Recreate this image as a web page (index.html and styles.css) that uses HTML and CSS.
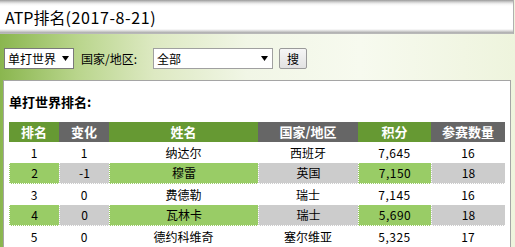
FILE: index.html
```html
<!DOCTYPE html>
<html lang="zh-CN">
<head>
<meta charset="utf-8">
<title>ATP排名</title>
<link rel="stylesheet" href="styles.css">
</head>
<body>
<header class="titlebar"><h1>ATP排名<span class="date">(2017-8-21)</span></h1></header>
<main class="page">
  <form class="filters">
    <select class="sel sel-type"><option>单打世界</option></select>
    <label class="lbl">国家/地区:</label>
    <select class="sel sel-country"><option>全部</option></select>
    <button type="button" class="btn">搜</button>
  </form>
  <section class="panel">
    <h2 class="panel-title">单打世界排名:</h2>
    <table class="rank">
      <colgroup><col class="c1"><col class="c2"><col class="c3"><col class="c4"><col class="c5"><col class="c6"></colgroup>
      <thead>
        <tr><th class="g">排名</th><th class="d">变化</th><th class="g">姓名</th><th class="d">国家/地区</th><th class="g">积分</th><th class="d">参赛数量</th></tr>
      </thead>
      <tbody>
        <tr><td>1</td><td>1</td><td>纳达尔</td><td>西班牙</td><td class="num">7,645</td><td>16</td></tr>
        <tr class="alt"><td class="g">2</td><td class="d">-1</td><td class="g">穆雷</td><td class="d">英国</td><td class="g num">7,150</td><td class="d">18</td></tr>
        <tr><td>3</td><td>0</td><td>费德勒</td><td>瑞士</td><td class="num">7,145</td><td>16</td></tr>
        <tr class="alt"><td class="g">4</td><td class="d">0</td><td class="g">瓦林卡</td><td class="d">瑞士</td><td class="g num">5,690</td><td class="d">18</td></tr>
        <tr><td>5</td><td>0</td><td>德约科维奇</td><td>塞尔维亚</td><td class="num">5,325</td><td>17</td></tr>
      </tbody>
    </table>
  </section>
</main>
</body>
</html>
```

FILE: styles.css
```css
html, body {
  margin: 0;
  padding: 0;
}
body {
  width: 515px;
  height: 247px;
  overflow: hidden;
  font-family: "Noto Sans CJK SC", "Liberation Sans", sans-serif;
  font-size: 12px;
  color: #000;
  background: linear-gradient(to right, #8ab64f 0%, #b9d58c 15%, #dde9c2 30%, #f1f6e6 48%, #f7faef 70%, #eef4dd 100%);
}
.titlebar {
  height: 34px;
  margin-right: 2px;
  background: linear-gradient(to bottom, #9a9a9a 0px, #cfcfcf 2px, #f4f4f4 4px, #fff 6px, #fff 29px, #d6d6d6 31px, #a8a8a8 33px, #c8c8c8 34px);
  box-shadow: 1px 0 0 #b0b0b0;
}
.titlebar h1 {
  margin: 0;
  padding: 0 0 0 5px;
  font-size: 16px;
  font-weight: normal;
  line-height: 34px;
}
.date {
  letter-spacing: 0.6px;
}
.filters {
  display: flex;
  align-items: center;
  height: 21px;
  margin: 14px 0 0 4px;
}
.sel {
  appearance: none;
  -webkit-appearance: none;
  height: 21px;
  margin: 0;
  padding: 0 0 0 3px;
  font-family: inherit;
  font-size: 12px;
  color: #000;
  border: 1px solid #a0a0a0;
  border-radius: 0;
  background: #fff url("data:image/svg+xml;utf8,<svg xmlns='http://www.w3.org/2000/svg' width='7' height='5'><path d='M0 0h7L3.5 5z' fill='black'/></svg>") no-repeat right 4px center;
}
.sel-type {
  width: 70px;
  border-color: #7a7a7a;
}
.lbl {
  margin-left: 7px;
  width: 72px;
}
.sel-country {
  width: 120px;
}
.btn {
  margin-left: 6px;
  width: 28px;
  height: 21px;
  padding: 0;
  font-family: inherit;
  font-size: 12px;
  border: 1px solid #9a9a9a;
  border-radius: 2px;
  background: linear-gradient(#f6f6f6, #e2e2e2);
  color: #000;
}
.panel {
  margin: 11px 4px 0 3px;
  padding: 11px 0 0 5px;
  background: #fff;
  border: 1px solid #a5a5a5;
  border-bottom: 0;
}
.panel-title {
  margin: 0;
  font-size: 13px;
  font-weight: bold;
  line-height: 20px;
}
.rank {
  margin-top: 10px;
  width: 496px;
  border-collapse: separate;
  border-spacing: 0;
  table-layout: fixed;
  text-align: center;
}
.c1 { width: 50px; }
.c2 { width: 50px; }
.c3 { width: 149px; }
.c4 { width: 100px; }
.c5 { width: 73px; }
.c6 { width: 74px; }
.rank th {
  height: 20px;
  padding: 0;
  font-size: 13px;
  font-weight: bold;
  color: #fff;
  line-height: 20px;
}
.rank th.g { background: #669933; }
.rank th.d { background: #666666; }
.rank td {
  height: 21px;
  padding: 0;
  line-height: 20px;
  box-sizing: border-box;
}
.rank td.num {
  letter-spacing: 0.5px;
}
.rank tr.alt td {
  border-bottom: 1px dotted #fff;
  border-left: 1px dotted #fff;
}
.rank tr.alt td.g { background: #99cc66; }
.rank tr.alt td.d { background: #cccccc; }
```
